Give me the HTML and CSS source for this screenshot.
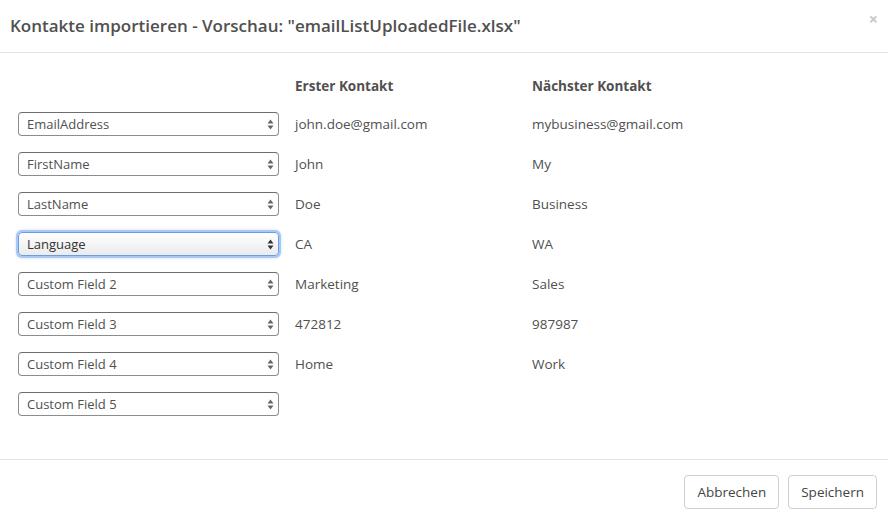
FILE: index.html
```html
<!DOCTYPE html>
<html lang="de">
<head>
<meta charset="utf-8">
<title>Kontakte importieren</title>
<link rel="stylesheet" href="styles.css">
</head>
<body>
<div class="modal">
  <header class="modal-header">
    <h1 class="modal-title">Kontakte importieren - Vorschau: "emailListUploadedFile.xlsx"</h1>
    <span class="close">×</span>
  </header>
  <main class="modal-body">
    <div class="grid">
      <div></div>
      <div class="col-head">Erster Kontakt</div>
      <div class="col-head">Nächster Kontakt</div>

      <div class="sel"><span class="sel-text">EmailAddress</span><svg class="arrows" width="7" height="11" viewBox="0 0 7 11"><path d="M3.5 0.5 L6.5 4.5 L0.5 4.5 Z M3.5 10.5 L6.5 6.5 L0.5 6.5 Z" fill="#666"/></svg></div>
      <div class="cell">john.doe@gmail.com</div>
      <div class="cell">mybusiness@gmail.com</div>

      <div class="sel"><span class="sel-text">FirstName</span><svg class="arrows" width="7" height="11" viewBox="0 0 7 11"><path d="M3.5 0.5 L6.5 4.5 L0.5 4.5 Z M3.5 10.5 L6.5 6.5 L0.5 6.5 Z" fill="#666"/></svg></div>
      <div class="cell">John</div>
      <div class="cell">My</div>

      <div class="sel"><span class="sel-text">LastName</span><svg class="arrows" width="7" height="11" viewBox="0 0 7 11"><path d="M3.5 0.5 L6.5 4.5 L0.5 4.5 Z M3.5 10.5 L6.5 6.5 L0.5 6.5 Z" fill="#666"/></svg></div>
      <div class="cell">Doe</div>
      <div class="cell">Business</div>

      <div class="sel focused"><span class="sel-text">Language</span><svg class="arrows" width="7" height="11" viewBox="0 0 7 11"><path d="M3.5 0.5 L6.5 4.5 L0.5 4.5 Z M3.5 10.5 L6.5 6.5 L0.5 6.5 Z" fill="#333"/></svg></div>
      <div class="cell">CA</div>
      <div class="cell">WA</div>

      <div class="sel"><span class="sel-text">Custom Field 2</span><svg class="arrows" width="7" height="11" viewBox="0 0 7 11"><path d="M3.5 0.5 L6.5 4.5 L0.5 4.5 Z M3.5 10.5 L6.5 6.5 L0.5 6.5 Z" fill="#666"/></svg></div>
      <div class="cell">Marketing</div>
      <div class="cell">Sales</div>

      <div class="sel"><span class="sel-text">Custom Field 3</span><svg class="arrows" width="7" height="11" viewBox="0 0 7 11"><path d="M3.5 0.5 L6.5 4.5 L0.5 4.5 Z M3.5 10.5 L6.5 6.5 L0.5 6.5 Z" fill="#666"/></svg></div>
      <div class="cell">472812</div>
      <div class="cell">987987</div>

      <div class="sel"><span class="sel-text">Custom Field 4</span><svg class="arrows" width="7" height="11" viewBox="0 0 7 11"><path d="M3.5 0.5 L6.5 4.5 L0.5 4.5 Z M3.5 10.5 L6.5 6.5 L0.5 6.5 Z" fill="#666"/></svg></div>
      <div class="cell">Home</div>
      <div class="cell">Work</div>

      <div class="sel"><span class="sel-text">Custom Field 5</span><svg class="arrows" width="7" height="11" viewBox="0 0 7 11"><path d="M3.5 0.5 L6.5 4.5 L0.5 4.5 Z M3.5 10.5 L6.5 6.5 L0.5 6.5 Z" fill="#666"/></svg></div>
      <div class="cell"></div>
      <div class="cell"></div>
    </div>
  </main>
  <footer class="modal-footer">
    <button class="btn">Abbrechen</button>
    <button class="btn">Speichern</button>
  </footer>
</div>
</body>
</html>
```

FILE: styles.css
```css
* { box-sizing: border-box; }
html, body {
  margin: 0;
  padding: 0;
  background: #fff;
}
body {
  font-family: "Open Sans", "Noto Sans", sans-serif;
  color: #505050;
  width: 888px;
  height: 519px;
  overflow: hidden;
}
.modal {
  display: flex;
  flex-direction: column;
  height: 519px;
}
.modal-header {
  height: 53px;
  border-bottom: 1px solid #e5e5e5;
  display: flex;
  align-items: center;
  justify-content: space-between;
  padding: 0 10px 2px 10px;
  position: relative;
}
.modal-title {
  margin: 0;
  font-size: 17px;
  font-weight: 600;
  color: #505050;
  letter-spacing: 0;
}
.close {
  position: absolute;
  right: 10px;
  top: 8px;
  font-size: 16px;
  font-weight: 700;
  color: #c8c8c8;
}
.modal-body {
  flex: 1;
  padding: 19px 0 0 18px;
}
.grid {
  display: grid;
  grid-template-columns: 261px 221px 200px;
  column-gap: 16px;
  grid-auto-rows: 24px;
  row-gap: 16px;
  align-items: center;
  font-size: 13.5px;
}
.col-head {
  font-weight: 700;
  color: #505050;
  font-size: 13.5px;
  padding-top: 4px;
}
.cell {
  color: #505050;
}
.sel {
  height: 24px;
  border: 1px solid #8c8c8c;
  border-top-color: #6e6e6e;
  border-radius: 4px;
  background: #fff;
  display: flex;
  align-items: center;
  justify-content: space-between;
  padding: 0 4px 0 8px;
  color: #505050;
  font-size: 13px;
}
.sel.focused {
  border-color: #6e9be6;
  box-shadow: 0 0 0 2px #a9c9f5, 0 0 3px 2px #c9dcf8;
  background: linear-gradient(#ffffff, #ebebeb);
  color: #333;
}
.arrows { display: block; }
.modal-footer {
  height: 60px;
  border-top: 1px solid #e5e5e5;
  display: flex;
  justify-content: flex-end;
  align-items: flex-start;
  gap: 9px;
  padding: 15px 11px 0 0;
}
.btn {
  height: 34px;
  padding: 0 12px;
  border: 1px solid #cfcfcf;
  border-radius: 4px;
  background: #fff;
  font-family: "Open Sans", "Noto Sans", sans-serif;
  font-size: 13.5px;
  color: #444;
}
```
